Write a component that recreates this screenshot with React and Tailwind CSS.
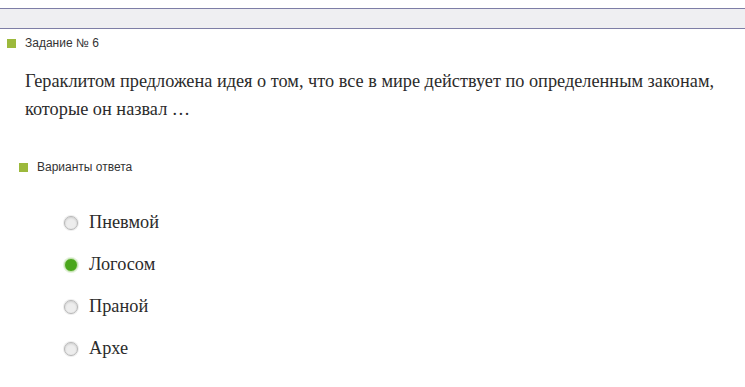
const options = [
  { id: 1, label: 'Пневмой', checked: false },
  { id: 2, label: 'Логосом', checked: true },
  { id: 3, label: 'Праной', checked: false },
  { id: 4, label: 'Архе', checked: false },
]

function Radio({ checked }) {
  return checked ? (
    <span className="w-[14px] h-[14px] rounded-full bg-[#4aa61c] border border-[#c8e6b4] shadow-[0_0_0_1px_#e4f1dc] flex-shrink-0" />
  ) : (
    <span className="w-[14px] h-[14px] rounded-full bg-[#ededed] border border-[#b9b9b9] shadow-[inset_0_1px_2px_#d0d0d0,0_0_0_1px_#eeeeee] flex-shrink-0" />
  )
}

export default function App() {
  return (
    <div className="w-[745px] h-[387px] bg-white overflow-hidden font-['Liberation_Sans',Arial,sans-serif]">
      {/* Полоса сверху */}
      <div className="h-[8px]" />
      <div className="h-[21px] border-y border-[#7e7ea6] bg-[#efeff2]" />

      {/* Задание */}
      <div className="flex items-center gap-[9px] pl-[7px] mt-[5px] text-[12px] text-[#333]">
        <span className="w-[9px] h-[9px] bg-[#9cb93c]" />
        <span>Задание № 6</span>
      </div>

      <p className="pl-[25px] pr-[10px] mt-[15px] text-[18.3px] leading-[28px] text-[#2b2b2b] font-['Liberation_Serif','Times_New_Roman',serif]">
        Гераклитом предложена идея о том, что все в мире действует по определенным законам, которые он назвал …
      </p>

      {/* Варианты */}
      <div className="flex items-center gap-[9px] pl-[19px] mt-[35px] text-[12px] text-[#333]">
        <span className="w-[9px] h-[9px] bg-[#9cb93c]" />
        <span>Варианты ответа</span>
      </div>

      <div className="pl-[64px] mt-[37px] flex flex-col gap-[22px] font-['Liberation_Serif','Times_New_Roman',serif]">
        {options.map(o => (
          <label key={o.id} className="flex items-center gap-[11px] h-[20px] text-[18.3px] text-[#2b2b2b]">
            <Radio checked={o.checked} />
            <span>{o.label}</span>
          </label>
        ))}
      </div>
    </div>
  )
}
